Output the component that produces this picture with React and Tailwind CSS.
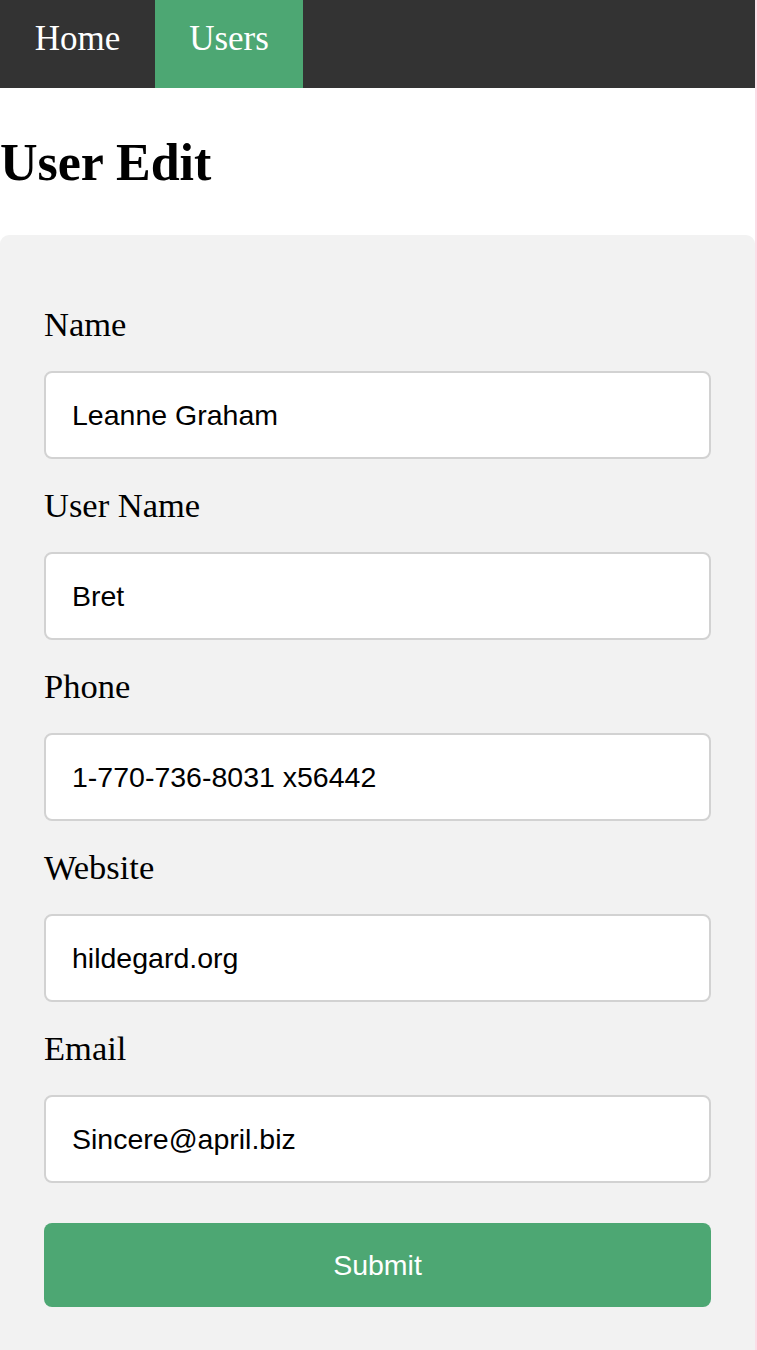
import React from "react";

const fields = [
  { label: "Name", value: "Leanne Graham" },
  { label: "User Name", value: "Bret" },
  { label: "Phone", value: "1-770-736-8031 x56442" },
  { label: "Website", value: "hildegard.org" },
  { label: "Email", value: "Sincere@april.biz" },
];

export default function App() {
  return (
    <div className="min-h-[1350px] bg-[#fbdde7] flex">
      <div className="w-[755px] bg-white min-h-[1350px] flex flex-col">
        <nav className="h-[88px] bg-[#333333] flex">
          <a className="h-full w-[155px] flex items-center justify-center pb-[10px] text-white text-[35px] font-['Liberation_Serif',serif]">
            Home
          </a>
          <a className="h-full w-[148px] flex items-center justify-center pb-[10px] bg-[#4da773] text-white text-[35px] font-['Liberation_Serif',serif]">
            Users
          </a>
        </nav>
        <h1 className="h-[147px] flex items-center pt-[3px] font-['Liberation_Serif',serif] font-bold text-[52px] leading-none text-black">
          User Edit
        </h1>
        <div className="flex-1 bg-[#f2f2f2] rounded-t-[9px] pt-[43px] px-[44px] pb-10">
          <form className="flex flex-col" onSubmit={(e) => e.preventDefault()}>
            {fields.map((f) => (
              <div key={f.label} className="flex flex-col">
                <label className="mt-[26px] h-[40px] leading-[40px] text-[34.5px] text-black font-['Liberation_Serif',serif]">
                  {f.label}
                </label>
                <input
                  readOnly
                  value={f.value}
                  className="mt-[27px] h-[88px] w-full bg-white border-2 border-[#d2d2d2] rounded-[8px] pl-[26px] text-[28.5px] text-black font-['Liberation_Sans',Arial,sans-serif] outline-none"
                />
              </div>
            ))}
            <button
              type="submit"
              className="mt-[40px] h-[84px] w-full bg-[#4da773] rounded-[8px] text-white text-[28.5px] font-['Liberation_Sans',Arial,sans-serif]"
            >
              Submit
            </button>
          </form>
        </div>
      </div>
    </div>
  );
}
